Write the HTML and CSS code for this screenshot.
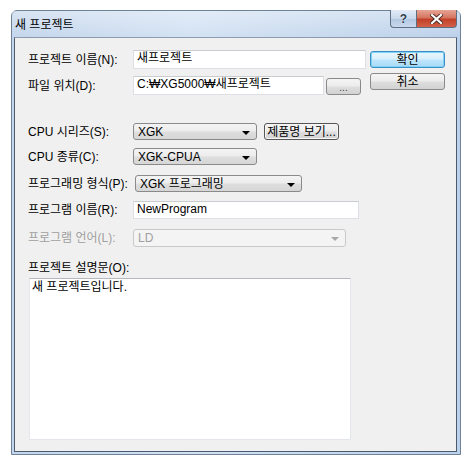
FILE: index.html
```html
<!DOCTYPE html>
<html lang="ko">
<head>
<meta charset="utf-8">
<title>새 프로젝트</title>
<link rel="stylesheet" href="styles.css">
</head>
<body>
<div class="window">
  <div class="titlebar">
    <span class="title">새 프로젝트</span>
    <div class="caption-btns">
      <div class="cap help">?</div>
      <div class="cap close">
        <svg width="13" height="10" viewBox="0 0 13 10"><path d="M2 1 L11 9 M11 1 L2 9" stroke="#4a2a24" stroke-width="4" stroke-linecap="square"/><path d="M2 1 L11 9 M11 1 L2 9" stroke="#ffffff" stroke-width="2.2" stroke-linecap="square"/></svg>
      </div>
    </div>
  </div>
  <div class="client">
    <div class="form">
      <div class="row r1"><span class="label">프로젝트 이름(N):</span><div class="edit w-name">새프로젝트</div></div>
      <div class="row r2"><span class="label">파일 위치(D):</span><div class="edit w-path">C:₩XG5000₩새프로젝트</div><div class="btn small dots">...</div></div>
      <div class="row r4"><span class="label">CPU 시리즈(S):</span><div class="combo w-cpu"><span>XGK</span><i class="arrow"></i></div><div class="btn small view">제품명 보기...</div></div>
      <div class="row r5"><span class="label">CPU 종류(C):</span><div class="combo w-cpu"><span>XGK-CPUA</span><i class="arrow"></i></div></div>
      <div class="row r6"><span class="label">프로그래밍 형식(P):</span><div class="combo w-fmt"><span>XGK 프로그래밍</span><i class="arrow"></i></div></div>
      <div class="row r7"><span class="label">프로그램 이름(R):</span><div class="edit w-prog">NewProgram</div></div>
      <div class="row r8 disabled"><span class="label">프로그램 언어(L):</span><div class="combo w-lang dis"><span>LD</span><i class="arrow"></i></div></div>
      <div class="desc-label">프로젝트 설명문(O):</div>
      <div class="memo">새 프로젝트입니다.</div>
    </div>
    <div class="side">
      <div class="btn big default">확인</div>
      <div class="btn big">취소</div>
    </div>
  </div>
</div>
</body>
</html>
```
FILE: styles.css
```css
* { box-sizing: border-box; }
html, body { margin: 0; padding: 0; background: #ffffff; }
body {
  font-family: "Liberation Sans", "Noto Sans CJK KR", sans-serif;
  font-size: 12px;
  color: #000;
}
.window {
  margin: 10px 0 0 11px;
  width: 450px;
  height: 445px;
  border: 1px solid #6f8196;
  border-radius: 6px 6px 0 0;
  background: linear-gradient(to right, #c4d6ec 0%, #d3e2f3 40%, #bcd1ea 100%);
  display: flex;
  flex-direction: column;
}
.titlebar {
  height: 26px;
  display: flex;
  justify-content: space-between;
  align-items: flex-start;
  background: linear-gradient(to bottom, rgba(255,255,255,0.35), rgba(255,255,255,0));
}
.title {
  padding: 7px 0 0 3px;
  line-height: 14px;
  font-size: 12px;
}
.caption-btns {
  display: flex;
  margin-right: 3px;
  margin-top: -1px;
}
.cap {
  height: 18px;
  display: flex;
  align-items: center;
  justify-content: center;
  border: 1px solid #5f6f83;
  border-top: none;
}
.help {
  width: 26px;
  border-radius: 0 0 0 4px;
  border-right: none;
  background: linear-gradient(to bottom, #e2ecf7 0%, #c9d9ec 50%, #b2c7e0 51%, #c8d9ee 100%);
  color: #2f3e52;
  font-weight: bold;
  font-size: 12px;
  text-shadow: 0 0 1px #fff;
}
.close {
  width: 41px;
  border-radius: 0 0 4px 0;
  background: linear-gradient(to bottom, #e6a595 0%, #d47560 45%, #c2412a 55%, #d26148 100%);
}
.client {
  flex: 1;
  margin: 0 3px 2px 2px;
  border: 1px solid #4c5b70;
  border-top-color: #8c9bb0;
  background: #f0f0f0;
  padding: 12px 10px 0 13px;
  display: flex;
  gap: 4px;
}
.form {
  width: 338px;
  display: flex;
  flex-direction: column;
}
.row {
  display: flex;
  align-items: center;
}
.label {
  min-width: 105px;
  white-space: nowrap;
  line-height: 14px;
}
.r1 { height: 19px; }
.r2 { height: 19px; margin-top: 7px; }
.r4 { height: 17px; margin-top: 28px; }
.r5 { height: 17px; margin-top: 8px; }
.r6 { height: 17px; margin-top: 10px; }
.r6 .label { min-width: 0; margin-right: 7px; }
.r7 { height: 18px; margin-top: 9px; }
.r8 { height: 18px; margin-top: 10px; }
.disabled .label { color: #a0a0a0; }

.edit {
  height: 100%;
  background: #fff;
  border: 1px solid #dcdfe3;
  border-top-color: #c9ccd1;
  padding: 0 0 0 3px;
  line-height: 15px;
  white-space: nowrap;
}
.w-name { width: 233px; }
.w-path { width: 191px; }
.w-prog { width: 226px; }

.btn {
  display: flex;
  align-items: center;
  justify-content: center;
  border: 1px solid #8a8a8a;
  border-radius: 3px;
  background: linear-gradient(to bottom, #f4f4f4 0%, #ececec 48%, #dedede 52%, #d2d2d2 100%);
  white-space: nowrap;
  line-height: 14px;
}
.small { height: 17px; }
.dots { width: 35px; margin-left: 2px; align-self: flex-end; color: #444; font-size: 10px; padding-top: 3px; }
.view { width: 75px; margin-left: 7px; box-shadow: inset 0 0 0 1px #f6f6f6; border-color: #555; }
.side {
  width: 75px;
  display: flex;
  flex-direction: column;
  gap: 5px;
  margin-top: 1px;
}
.big { height: 17px; }
.default {
  border-color: #3b8fc9;
  background: linear-gradient(to bottom, #eaf6fd 0%, #d9f0fc 48%, #bee6fd 52%, #a7d9f5 100%);
  box-shadow: inset 0 0 0 1px #7fd3f4;
}

.combo {
  height: 100%;
  display: flex;
  align-items: center;
  justify-content: space-between;
  border: 1px solid #8a8a8a;
  border-radius: 3px;
  background: linear-gradient(to bottom, #f4f4f4 0%, #ececec 48%, #dedede 52%, #d6d6d6 100%);
  padding: 0 6px 0 4px;
  line-height: 14px;
  white-space: nowrap;
}
.w-cpu { width: 124px; }
.w-fmt { width: 167px; }
.w-lang { width: 213px; }
.combo.dis {
  border-color: #c9c9c9;
  background: #f4f4f4;
  color: #a0a0a0;
}
.arrow {
  width: 0;
  height: 0;
  border-left: 4px solid transparent;
  border-right: 4px solid transparent;
  border-top: 4px solid #000;
  margin-top: 2px;
}
.dis .arrow { border-top-color: #a8a8a8; }

.desc-label {
  margin-top: 15px;
  height: 12px;
  line-height: 12px;
}
.memo {
  margin: 4px 0 0 1px;
  width: 322px;
  height: 162px;
  background: #fff;
  border: 1px solid #e3e6ea;
  border-top-color: #b5b8bd;
  padding: 2px 2px;
  line-height: 13px;
}
```
